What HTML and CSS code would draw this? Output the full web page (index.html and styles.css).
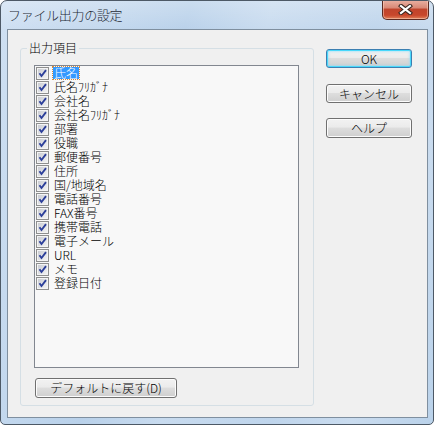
FILE: index.html
```html
<!DOCTYPE html>
<html lang="ja">
<head>
<meta charset="utf-8">
<title>ファイル出力の設定</title>
<link rel="stylesheet" href="styles.css">
</head>
<body>
<div class="window">
  <div class="titlebar">
    <span class="title">ファイル出力の設定</span>
    <div class="close">
      <svg width="15" height="11" viewBox="0 0 15 11">
        <path d="M3 2 L12 9 M12 2 L3 9" stroke="#3a2620" stroke-width="4.2" stroke-linecap="square" fill="none"/>
        <path d="M3 2 L12 9 M12 2 L3 9" stroke="#ffffff" stroke-width="2.2" stroke-linecap="square" fill="none"/>
      </svg>
    </div>
  </div>
  <div class="client">
    <div class="group">
      <span class="group-label">出力項目</span>
      <div class="listbox">
        <div class="row"><span class="cb"></span><span class="txt sel">氏名</span></div>
        <div class="row"><span class="cb"></span><span class="txt">氏名ﾌﾘｶﾞﾅ</span></div>
        <div class="row"><span class="cb"></span><span class="txt">会社名</span></div>
        <div class="row"><span class="cb"></span><span class="txt">会社名ﾌﾘｶﾞﾅ</span></div>
        <div class="row"><span class="cb"></span><span class="txt">部署</span></div>
        <div class="row"><span class="cb"></span><span class="txt">役職</span></div>
        <div class="row"><span class="cb"></span><span class="txt">郵便番号</span></div>
        <div class="row"><span class="cb"></span><span class="txt">住所</span></div>
        <div class="row"><span class="cb"></span><span class="txt">国/地域名</span></div>
        <div class="row"><span class="cb"></span><span class="txt">電話番号</span></div>
        <div class="row"><span class="cb"></span><span class="txt">FAX番号</span></div>
        <div class="row"><span class="cb"></span><span class="txt">携帯電話</span></div>
        <div class="row"><span class="cb"></span><span class="txt">電子メール</span></div>
        <div class="row"><span class="cb"></span><span class="txt">URL</span></div>
        <div class="row"><span class="cb"></span><span class="txt">メモ</span></div>
        <div class="row"><span class="cb"></span><span class="txt">登録日付</span></div>
      </div>
      <div class="btn btn-default">デフォルトに戻す(D)</div>
    </div>
    <div class="side">
      <div class="btn btn-side btn-primary">OK</div>
      <div class="btn btn-side">キャンセル</div>
      <div class="btn btn-side btn-help">ヘルプ</div>
    </div>
  </div>
</div>
</body>
</html>
```
FILE: styles.css
```css
* { box-sizing: border-box; }
html, body { margin: 0; padding: 0; background: #ffffff; }
body {
  font-family: "Noto Sans CJK JP", "Liberation Sans", sans-serif;
  font-size: 12px;
  font-weight: 300;
  color: #000;
}
.window {
  width: 434px;
  height: 425px;
  border: 1px solid #4d5966;
  border-radius: 7px 7px 5px 5px;
  background:
    linear-gradient(to bottom, rgba(255,255,255,0.25), rgba(255,255,255,0) 30px),
    linear-gradient(105deg, #cfe0f2 0%, #c3d8ee 20%, #b9d1ea 35%, #c8dbef 50%, #bfd5ec 70%, #cadcef 85%, #bad2ea 100%);
  display: flex;
  flex-direction: column;
  padding: 0 5px 6px 6px;
  overflow: hidden;
}
.titlebar {
  height: 28px;
  display: flex;
  justify-content: space-between;
  align-items: flex-start;
}
.title {
  margin-left: 1px;
  margin-top: 6px;
  font-size: 13px;
  line-height: 16px;
  color: #1e2a36;
  letter-spacing: -0.3px;
}
.close {
  width: 47px;
  height: 20px;
  margin-top: -1px;
  margin-right: -1px;
  border: 1px solid #5b2a22;
  border-top: none;
  border-radius: 0 0 5px 5px;
  background: linear-gradient(to bottom, #eab2a4 0%, #d98a78 40%, #c0442c 50%, #c8472c 80%, #e0805a 100%);
  box-shadow: inset 0 0 0 1px rgba(255,220,200,0.5);
  display: flex;
  align-items: center;
  justify-content: center;
}
.client {
  flex: 1;
  border: 1px solid #7f8f9f;
  background: #f0f0f0;
  display: flex;
  align-items: flex-start;
  padding: 18px 0 11px 12px;
}
.group {
  position: relative;
  width: 294px;
  height: 358px;
  border: 1px solid #d5dfe5;
  border-radius: 3px;
  padding: 16px 0 0 13px;
}
.group-label {
  position: absolute;
  left: 6px;
  top: -9px;
  padding: 0 2px;
  background: #f0f0f0;
  line-height: 16px;
}
.listbox {
  width: 265px;
  height: 303px;
  border: 1px solid #828790;
  background: #f8f8f8;
  overflow: hidden;
}
.row {
  height: 14px;
  display: flex;
  align-items: flex-start;
  padding-left: 1px;
}
.cb {
  width: 13px;
  height: 13px;
  margin-top: 1px;
  border: 1px solid #8e8f8f;
  background:
    url("data:image/svg+xml;utf8,<svg xmlns='http://www.w3.org/2000/svg' width='11' height='11' viewBox='0 0 11 11'><path d='M2.5 5.2 L4.5 8 L9 2.2' stroke='%232c3f9a' stroke-width='1.9' fill='none'/></svg>") center/11px 11px no-repeat,
    linear-gradient(135deg, #c6c9d0, #f6f6f6);
  box-shadow: inset 0 0 0 1px #f4f4f4;
  flex: none;
}
.txt {
  margin-left: 4px;
  margin-top: 1px;
  padding: 0 1px;
  height: 12px;
  line-height: 12px;
  white-space: nowrap;
}
.sel {
  background: #3399ff;
  color: #fff;
  outline: 1px dotted #d68a3a;
}
.btn {
  border: 1px solid #707070;
  border-radius: 3px;
  background: linear-gradient(to bottom, #f2f2f2 0%, #ebebeb 45%, #dddddd 50%, #cfcfcf 100%);
  box-shadow: inset 0 0 0 1px #fcfcfc;
  text-align: center;
  line-height: 16px;
  font-size: 12px;
}
.btn-default {
  width: 142px;
  height: 20px;
  margin-top: 10px;
  margin-left: 1px;
  line-height: 18px;
}
.side {
  margin-left: 12px;
  margin-top: 1px;
  display: flex;
  flex-direction: column;
  gap: 16px;
}
.btn-side {
  width: 86px;
  height: 19px;
  line-height: 17px;
}
.btn-help { margin-top: -1px; height: 20px; }
.btn-primary {
  border-color: #3c7fb1;
  box-shadow: inset 0 0 0 1px #48d8fb, inset 0 0 2px 2px rgba(140,220,250,0.5);
}
```
